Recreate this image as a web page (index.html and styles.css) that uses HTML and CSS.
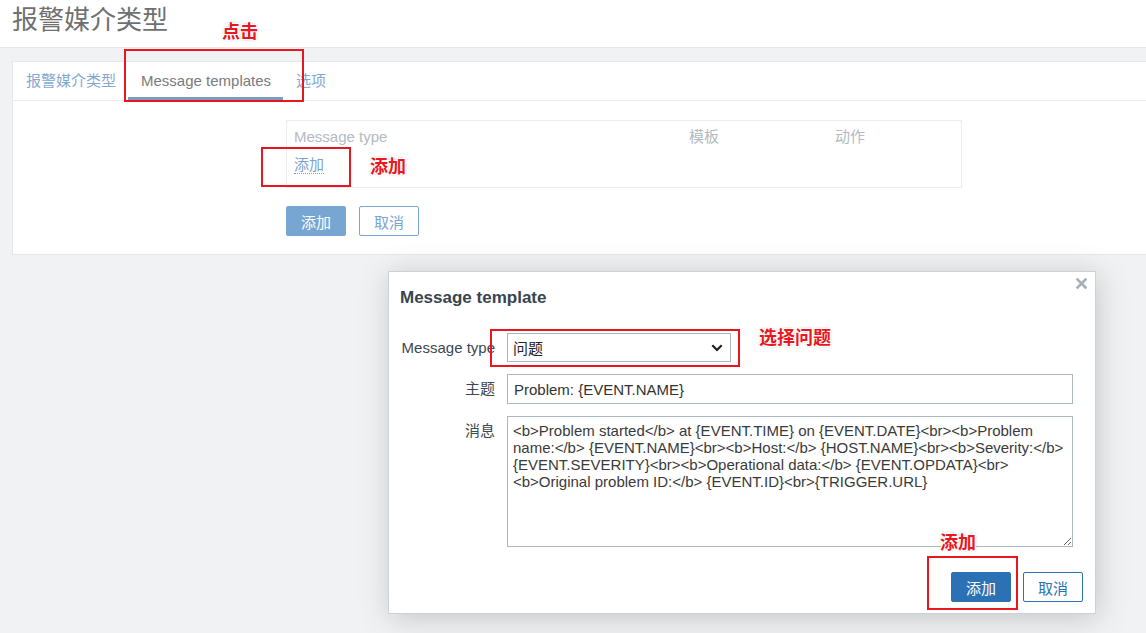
FILE: index.html
```html
<!DOCTYPE html>
<html lang="zh">
<head>
<meta charset="utf-8">
<title>报警媒介类型</title>
<link rel="stylesheet" href="styles.css">
</head>
<body>
<header class="page-header"><h1 class="page-title">报警媒介类型</h1></header>
<main class="content">
  <section class="card">
    <nav class="tabs">
      <a class="tab">报警媒介类型</a>
      <a class="tab tab-active">Message templates</a>
      <a class="tab">选项</a>
    </nav>
    <div class="tab-body">
      <div class="form-grid">
        <div class="form-label"></div>
        <div class="tpl-table">
          <div class="tpl-head">
            <span>Message type</span><span>模板</span><span>动作</span>
          </div>
          <div class="tpl-row"><a class="link-add">添加</a></div>
        </div>
        <div class="form-label"></div>
        <div class="form-buttons">
          <button class="btn btn-faded">添加</button>
          <button class="btn-alt btn-alt-faded">取消</button>
        </div>
      </div>
    </div>
  </section>
</main>

<div class="modal">
  <div class="modal-head">
    <h4 class="modal-title">Message template</h4>
    <span class="modal-close"><svg width="11" height="11" viewBox="0 0 11 11"><path d="M1.5 1.5 L9.5 9.5 M9.5 1.5 L1.5 9.5" stroke="#a7afb6" stroke-width="2.6" stroke-linecap="square"/></svg></span>
  </div>
  <div class="modal-form">
    <label class="m-label">Message type</label>
    <div class="select"><span>问题</span><svg width="12" height="8" viewBox="0 0 12 8"><path d="M1.3 1.3 L6 6 L10.7 1.3" fill="none" stroke="#1e1e1e" stroke-width="2.2"/></svg></div>
    <label class="m-label">主题</label>
    <input class="m-input" type="text" value="Problem: {EVENT.NAME}">
    <label class="m-label">消息</label>
    <textarea class="m-textarea">&lt;b&gt;Problem started&lt;/b&gt; at {EVENT.TIME} on {EVENT.DATE}&lt;br&gt;&lt;b&gt;Problem name:&lt;/b&gt; {EVENT.NAME}&lt;br&gt;&lt;b&gt;Host:&lt;/b&gt; {HOST.NAME}&lt;br&gt;&lt;b&gt;Severity:&lt;/b&gt; {EVENT.SEVERITY}&lt;br&gt;&lt;b&gt;Operational data:&lt;/b&gt; {EVENT.OPDATA}&lt;br&gt;
&lt;b&gt;Original problem ID:&lt;/b&gt; {EVENT.ID}&lt;br&gt;{TRIGGER.URL}</textarea>
  </div>
  <div class="modal-foot">
    <button class="btn">添加</button>
    <button class="btn-alt">取消</button>
  </div>
</div>

<div class="mark mark-tab"></div>
<div class="mark mark-link"></div>
<div class="mark mark-select"></div>
<div class="mark mark-btn"></div>
<span class="note note-click">点击</span>
<span class="note note-add1">添加</span>
<span class="note note-select">选择问题</span>
<span class="note note-add2">添加</span>
</body>
</html>
```

FILE: styles.css
```css
* { box-sizing: border-box; }
body {
  margin: 0;
  background: #f1f2f3;
  font-family: "Liberation Sans", "Noto Sans CJK SC", sans-serif;
  font-size: 15px;
  overflow: hidden;
  height: 633px;
}
.page-header {
  background: #fff;
  height: 48px;
  border-bottom: 1px solid #e7e8e9;
  padding: 0 12px;
}
.page-title {
  margin: 0;
  font-weight: normal;
  font-size: 26px;
  line-height: 40px;
  color: #707070;
}
.content { padding: 13px 0 0 12px; }
.card {
  background: #fff;
  border: 1px solid #e6e7e8;
  border-right: 0;
}
.tabs {
  display: flex;
  border-bottom: 1px solid #ececec;
}
.tab {
  height: 38px;
  line-height: 38px;
  padding: 0 12px 0 13px;
  color: #82a8d2;
  border-bottom: 3px solid transparent;
}
.tab-active {
  color: #7b7b7b;
  border-bottom-color: #7b9cc1;
}
.tab-body { padding: 19px 0 18px; }
.form-grid {
  display: grid;
  grid-template-columns: 273px 676px;
  row-gap: 18px;
}
.tpl-table {
  border: 1px solid #ebecec;
  height: 68px;
  padding: 6px 7px 0;
}
.tpl-head {
  display: grid;
  grid-template-columns: 395px 146px 1fr;
  line-height: 20px;
  color: #b3bac2;
}
.tpl-row { margin-top: 8px; line-height: 20px; }
.link-add {
  color: #7aa5d2;
  border-bottom: 1px dotted #7aa5d2;
}
.form-buttons { display: flex; gap: 13px; }
.btn, .btn-alt {
  font: inherit;
  width: 60px;
  height: 30px;
  border-radius: 2px;
  padding: 0;
}
.btn {
  background: #2c71b4;
  border: 1px solid #2c71b4;
  color: #fff;
}
.btn-faded { background: #77a6d3; border-color: #77a6d3; }
.btn-alt {
  background: #fff;
  border: 1px solid #2c71b4;
  color: #2c71b4;
}
.btn-alt-faded { border-color: #7aa5d2; color: #7aa5d2; }

.modal {
  position: absolute;
  left: 388px;
  top: 271px;
  width: 708px;
  height: 343px;
  background: #fff;
  border: 1px solid #cbd1d6;
  box-shadow: 2px 4px 28px rgba(60, 70, 80, 0.25);
  padding: 0 12px 12px 11px;
}
.modal-head { height: 52px; display: flex; align-items: center; }
.modal-title {
  margin: 0;
  font-size: 17px;
  font-weight: bold;
  color: #384551;
}
.modal-close { position: absolute; top: 6px; right: 8px; display: flex; }
.modal-form {
  margin-top: 9px;
  display: grid;
  grid-template-columns: 95px 566px;
  column-gap: 12px;
  row-gap: 12px;
  align-items: start;
}
.m-label {
  text-align: right;
  line-height: 29px;
  color: #3e4851;
}
.select {
  width: 224px;
  height: 29px;
  border: 1px solid #a9b7c4;
  display: flex;
  align-items: center;
  justify-content: space-between;
  padding: 0 7px 0 5px;
  color: #222;
}
.m-input {
  font: inherit;
  height: 30px;
  border: 1px solid #a9b7c4;
  padding: 0 6px;
  color: #333;
  outline: none;
}
.m-textarea {
  font: inherit;
  height: 131px;
  border: 1px solid #a9b7c4;
  padding: 5px 5px;
  line-height: 17px;
  color: #3a3a3a;
  resize: both;
  outline: none;
}
.modal-foot {
  margin-top: 25px;
  display: flex;
  justify-content: flex-end;
  gap: 12px;
}

.mark {
  position: absolute;
  border: 2px solid #e8161f;
}
.mark-tab { left: 124px; top: 49px; width: 180px; height: 53px; }
.mark-link { left: 261px; top: 147px; width: 90px; height: 40px; }
.mark-select { left: 490px; top: 329px; width: 250px; height: 38px; }
.mark-btn { left: 927px; top: 556px; width: 91px; height: 54px; }
.note {
  position: absolute;
  font-family: "Noto Sans CJK SC", sans-serif;
  font-weight: bold;
  font-size: 18px;
  line-height: 20px;
  color: #ea1620;
  text-shadow: 1px 1px 0 #fff, -1px -1px 0 #fff, 1px -1px 0 #fff, -1px 1px 0 #fff, 0 0 3px rgba(0,0,0,0.45);
}
.note-click { left: 222px; top: 20px; }
.note-add1 { left: 370px; top: 155px; }
.note-select { left: 759px; top: 326px; }
.note-add2 { left: 940px; top: 531px; }
```
